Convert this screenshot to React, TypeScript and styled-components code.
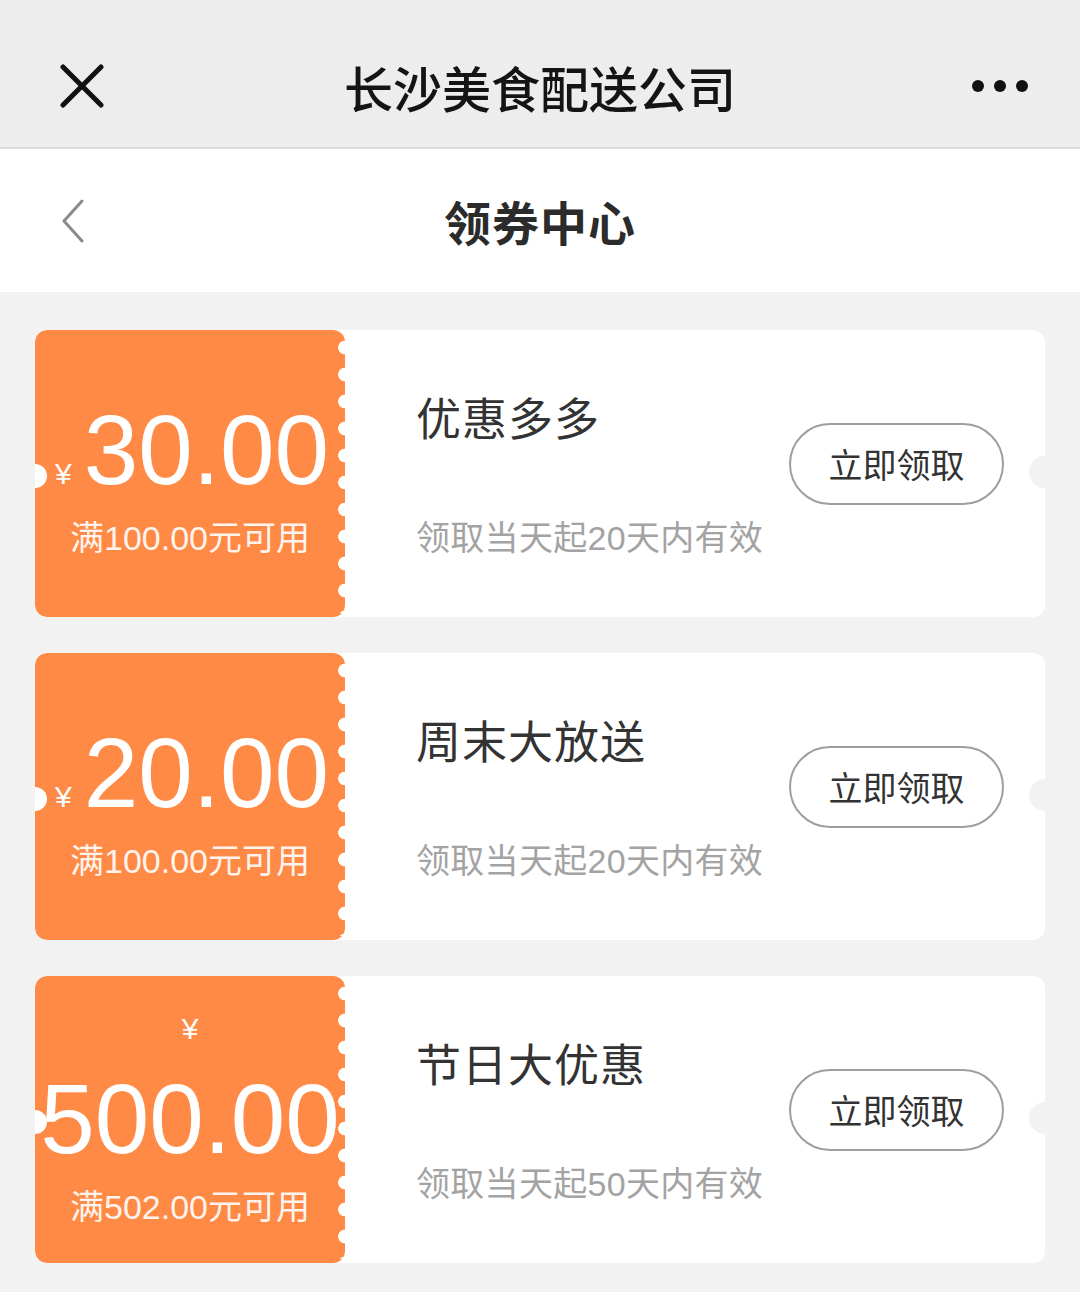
import React from "react";
import styled, { createGlobalStyle } from "styled-components";

const GlobalStyle = createGlobalStyle`
  html, body {
    margin: 0;
    padding: 0;
    background: #f2f2f2;
  }
  body {
    font-family: "Liberation Sans", "Noto Sans CJK SC", sans-serif;
    -webkit-font-smoothing: antialiased;
  }
  * { box-sizing: border-box; }
`;

const Page = styled.div`
  width: 1080px;
  min-height: 1292px;
  background: #f2f2f2;
  display: flex;
  flex-direction: column;
`;

const TopBar = styled.header`
  height: 149px;
  background: #ededed;
  border-bottom: 2px solid #dcdcdc;
  display: grid;
  grid-template-columns: 150px 1fr 150px;
  align-items: center;
  padding-top: 25px;
`;

const TopTitle = styled.h1`
  margin: 0;
  text-align: center;
  font-family: "Noto Sans CJK SC", sans-serif;
  font-size: 49px;
  font-weight: 500;
  color: #141414;
  line-height: 1;
`;

const IconSlot = styled.div<{ $align: "start" | "end" }>`
  display: flex;
  justify-content: ${(p) => (p.$align === "start" ? "flex-start" : "flex-end")};
  padding: ${(p) => (p.$align === "start" ? "0 0 0 60px" : "0 50px 0 0")};
  align-items: center;
`;

const NavBar = styled.div`
  height: 143px;
  background: #ffffff;
  display: grid;
  grid-template-columns: 150px 1fr 150px;
  align-items: center;
`;

const NavTitle = styled.h2`
  margin: 0;
  text-align: center;
  font-family: "Noto Sans CJK SC", sans-serif;
  font-size: 47px;
  font-weight: 700;
  letter-spacing: 1px;
  color: #2b2b2b;
  line-height: 1;
`;

const List = styled.main`
  display: flex;
  flex-direction: column;
  gap: 36px;
  padding: 38px 35px 30px 35px;
`;

const Card = styled.section`
  position: relative;
  height: 287px;
  display: flex;
  background: #ffffff;
  border-radius: 12px;
  overflow: hidden;

  &::before {
    content: "";
    position: absolute;
    left: -12px;
    top: 50%;
    width: 24px;
    height: 24px;
    margin-top: -10px;
    border-radius: 50%;
    background: #ffffff;
    z-index: 2;
  }

  &::after {
    content: "";
    position: absolute;
    right: -16px;
    top: 50%;
    width: 32px;
    height: 32px;
    margin-top: -18px;
    border-radius: 50%;
    background: #f2f2f2;
  }
`;

const Stub = styled.div<{ $stacked: boolean }>`
  position: relative;
  width: 310px;
  flex: none;
  background: #fe8a46;
  border-radius: 12px;
  display: flex;
  flex-direction: column;
  align-items: center;
  justify-content: center;
  padding-top: ${(p) => (p.$stacked ? "0" : "14px")};
  color: #ffffff;

  &::after {
    content: "";
    position: absolute;
    top: 4px;
    bottom: 4px;
    right: -7px;
    width: 14px;
    background-image: radial-gradient(circle, #ffffff 6.5px, rgba(255, 255, 255, 0) 7.2px);
    background-size: 14px 27px;
    background-repeat: repeat-y;
    background-position: center 0;
  }
`;

const AmountRow = styled.div<{ $stacked: boolean }>`
  display: flex;
  flex-direction: ${(p) => (p.$stacked ? "column" : "row")};
  align-items: ${(p) => (p.$stacked ? "center" : "baseline")};
  justify-content: center;
  gap: ${(p) => (p.$stacked ? "26px" : "12px")};
  white-space: nowrap;
  padding-left: ${(p) => (p.$stacked ? "0" : "4px")};
`;

const Yen = styled.span`
  font-size: 30px;
  line-height: 34px;
  color: #ffffff;
`;

const Amount = styled.span`
  font-family: "Liberation Sans", sans-serif;
  font-size: 98px;
  line-height: 94px;
  color: #ffffff;
`;

const Condition = styled.div`
  margin-top: 20px;
  font-size: 34px;
  line-height: 42px;
  color: rgba(255, 255, 255, 0.93);
  white-space: nowrap;
`;

const Body = styled.div`
  flex: 1;
  display: flex;
  align-items: center;
  padding: 0 41px 0 71px;
`;

const Info = styled.div`
  flex: 1;
  align-self: stretch;
  display: flex;
  flex-direction: column;
  padding-top: 58px;
`;

const Title = styled.div`
  font-family: "Noto Sans CJK SC", sans-serif;
  font-size: 45px;
  line-height: 58px;
  color: #333333;
  letter-spacing: 1px;
`;

const Validity = styled.div`
  margin-top: 71px;
  font-size: 34px;
  line-height: 42px;
  color: #a3a3a3;
  white-space: nowrap;
  letter-spacing: 0.3px;
`;

const ClaimButton = styled.button`
  width: 215px;
  height: 82px;
  margin-bottom: 20px;
  border: 2.5px solid #9e9e9e;
  border-radius: 41px;
  background: #ffffff;
  font-family: "Noto Sans CJK SC", sans-serif;
  font-size: 34px;
  color: #333333;
  padding: 0;
  cursor: pointer;
`;

const CloseIcon = () => (
  <svg width="44" height="44" viewBox="0 0 44 44">
    <path d="M3 3 L41 41 M41 3 L3 41" stroke="#111" strokeWidth="5" strokeLinecap="round" />
  </svg>
);

const MoreIcon = () => (
  <svg width="60" height="14" viewBox="0 0 60 14">
    <circle cx="8" cy="7" r="6" fill="#111" />
    <circle cx="30" cy="7" r="6" fill="#111" />
    <circle cx="52" cy="7" r="6" fill="#111" />
  </svg>
);

const BackIcon = () => (
  <svg width="26" height="44" viewBox="0 0 26 44">
    <path d="M22 2 L4 22 L22 42" fill="none" stroke="#8a8a8a" strokeWidth="3" strokeLinecap="round" strokeLinejoin="round" />
  </svg>
);

type Coupon = {
  amount: string;
  condition: string;
  title: string;
  validity: string;
};

const coupons: Coupon[] = [
  { amount: "30.00", condition: "满100.00元可用", title: "优惠多多", validity: "领取当天起20天内有效" },
  { amount: "20.00", condition: "满100.00元可用", title: "周末大放送", validity: "领取当天起20天内有效" },
  { amount: "500.00", condition: "满502.00元可用", title: "节日大优惠", validity: "领取当天起50天内有效" },
];

export default function App() {
  return (
    <>
      <GlobalStyle />
      <Page>
        <TopBar>
          <IconSlot $align="start">
            <CloseIcon />
          </IconSlot>
          <TopTitle>长沙美食配送公司</TopTitle>
          <IconSlot $align="end">
            <MoreIcon />
          </IconSlot>
        </TopBar>
        <NavBar>
          <IconSlot $align="start">
            <BackIcon />
          </IconSlot>
          <NavTitle>领券中心</NavTitle>
          <div />
        </NavBar>
        <List>
          {coupons.map((c) => {
            const stacked = c.amount.length > 5;
            return (
              <Card key={c.title}>
                <Stub $stacked={stacked}>
                  <AmountRow $stacked={stacked}>
                    <Yen>¥</Yen>
                    <Amount>{c.amount}</Amount>
                  </AmountRow>
                  <Condition>{c.condition}</Condition>
                </Stub>
                <Body>
                  <Info>
                    <Title>{c.title}</Title>
                    <Validity>{c.validity}</Validity>
                  </Info>
                  <ClaimButton>立即领取</ClaimButton>
                </Body>
              </Card>
            );
          })}
        </List>
      </Page>
    </>
  );
}
